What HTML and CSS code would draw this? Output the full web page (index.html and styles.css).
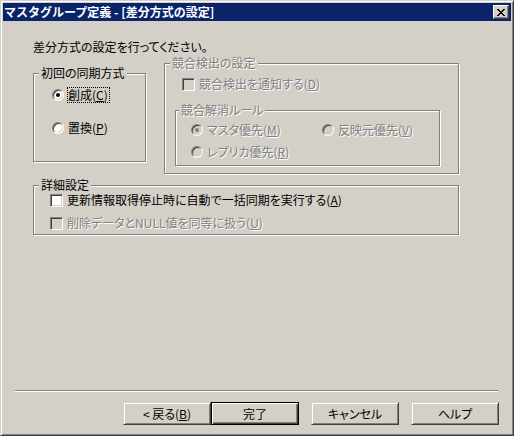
FILE: index.html
```html
<!DOCTYPE html>
<html lang="ja">
<head>
<meta charset="UTF-8">
<title>マスタグループ定義</title>
<link rel="stylesheet" href="styles.css">
</head>
<body>
<div class="window">
    <div class="titlebar">
        <span class="title">マスタグループ定義 - [差分方式の設定]</span>
        <span class="close">
            <svg width="8" height="7" viewBox="0 0 8 7" shape-rendering="crispEdges">
                <path d="M0 0h2v1h-2zM6 0h2v1h-2zM1 1h2v1h-2zM5 1h2v1h-2zM2 2h4v1h-4zM3 3h2v1h-2zM2 4h4v1h-4zM1 5h2v1h-2zM5 5h2v1h-2zM0 6h2v1h-2zM6 6h2v1h-2z" fill="#000"/>
            </svg>
        </span>
    </div>

    <div class="client">
        <p class="intro">差分方式の設定を行ってください。</p>

        <div class="row">
            <!-- 初回の同期方式 -->
            <fieldset class="group g-initial">
                <legend>初回の同期方式</legend>
                <div class="group-body">
                    <div class="opt radio checked"><span class="mark"></span><span class="focus">創成(<u>C</u>)</span></div>
                    <div class="opt radio second"><span class="mark"></span><span>置換(<u>P</u>)</span></div>
                </div>
            </fieldset>

            <!-- 競合検出 (無効) -->
            <fieldset class="group g-conflict disabled">
                <legend>競合検出の設定</legend>
                <div class="group-body">
                    <div class="opt check notify"><span class="box"></span><span>競合検出を通知する(<u>D</u>)</span></div>
                    <fieldset class="group g-rule">
                        <legend>競合解消ルール</legend>
                        <div class="group-body rule-grid">
                            <div class="opt radio checked"><span class="mark"></span><span>マスタ優先(<u>M</u>)</span></div>
                            <div class="opt radio"><span class="mark"></span><span>反映元優先(<u>V</u>)</span></div>
                            <div class="opt radio"><span class="mark"></span><span>レプリカ優先(<u>R</u>)</span></div>
                        </div>
                    </fieldset>
                </div>
            </fieldset>
        </div>

        <!-- 詳細設定 -->
        <fieldset class="group g-detail">
            <legend>詳細設定</legend>
            <div class="group-body">
                <div class="opt check"><span class="box"></span><span>更新情報取得停止時に自動で一括同期を実行する(<u>A</u>)</span></div>
                <div class="opt check disabled second"><span class="box"></span><span>削除データとNULL値を同等に扱う(<u>U</u>)</span></div>
            </div>
        </fieldset>

        <div class="footer">
            <div class="separator"></div>
            <div class="buttons">
                <button class="btn">&lt; 戻る(<u>B</u>)</button>
                <button class="btn default">完了</button>
                <button class="btn gap">キャンセル</button>
                <button class="btn gap">ヘルプ</button>
            </div>
        </div>
    </div>
</div>
</body>
</html>
```

FILE: styles.css
```css
*{
    box-sizing: border-box;
}
body{
    margin: 0;
    background-color: #d4d0c8;
    font-family: "Noto Sans CJK JP", sans-serif;
    font-size: 12px;
    line-height: 14px;
    color: #000;
    font-feature-settings: "palt";
}
u{
    text-decoration-thickness: 1px;
    text-underline-offset: 1px;
}

/* 窓枠 */
.window{
    width: 514px;
    height: 436px;
    border: 1px solid;
    border-color: #d4d0c8 #404040 #404040 #d4d0c8;
    box-shadow: inset 1px 1px #fff, inset -1px -1px #808080;
    padding: 2px;
    display: flex;
    flex-direction: column;
}
.titlebar{
    height: 18px;
    background-color: #0a246a;
    display: flex;
    align-items: center;
    justify-content: space-between;
    padding: 0 2px 0 1px;
}
.title{
    color: #fff;
    font-weight: bold;
    font-feature-settings: normal;
}
.close{
    width: 16px;
    height: 14px;
    background-color: #d4d0c8;
    border: 1px solid;
    border-color: #fff #404040 #404040 #fff;
    box-shadow: inset -1px -1px #808080;
    display: flex;
    align-items: center;
    justify-content: center;
}
.close svg{
    display: block;
}

.client{
    flex: 1;
    display: flex;
    flex-direction: column;
    padding: 19px 12px 8px 30px;
}
.intro{
    margin: 0;
}
.row{
    display: flex;
    gap: 18px;
    align-items: flex-start;
    margin-top: 3px;
}

/* グループボックス */
.group{
    margin: 0;
    padding: 0;
    min-width: 0;
    border: 1px solid #808080;
    box-shadow: 1px 1px #fff, inset 1px 1px #fff;
}
.group legend{
    margin-left: 5px;
    padding: 0 2px;
    line-height: 12px;
    background-color: #d4d0c8;
}
.g-initial{
    width: 113px;
    height: 95px;
    margin-top: 10px;
}
.g-initial .group-body{
    padding: 8px 0 0 18px;
}
.g-conflict{
    width: 295px;
    height: 117px;
}
.g-conflict > .group-body{
    padding: 8px 0 0 10px;
}
.notify{
    margin-left: 7px;
}
.g-rule{
    width: 265px;
    height: 62px;
    margin-top: 13px;
}
.g-rule legend{
    margin-left: 3px;
}
.rule-grid{
    display: grid;
    grid-template-columns: 131px 1fr;
    row-gap: 8px;
    padding: 7px 0 0 15px;
}
.g-detail{
    width: 426px;
    height: 56px;
    margin-top: 5px;
}
.g-detail .group-body{
    padding: 2px 0 0 16px;
}

/* ラジオ・チェック */
.opt{
    display: flex;
    align-items: center;
    min-height: 14px;
    white-space: nowrap;
}
.opt.second{
    margin-top: 18px;
}
.g-detail .opt.second{
    margin-top: 9px;
}
.mark{
    position: relative;
    width: 12px;
    height: 12px;
    border-radius: 50%;
    border: 1px solid;
    border-color: #808080 #fff #fff #808080;
    box-shadow: inset 1px 1px #404040, inset -1px -1px #d4d0c8;
    background-color: #fff;
    margin-right: 4px;
    flex: none;
}
.checked .mark::after{
    content: "";
    position: absolute;
    left: 3px;
    top: 3px;
    width: 4px;
    height: 4px;
    border-radius: 50%;
    background-color: #000;
}
.box{
    width: 13px;
    height: 13px;
    border: 1px solid;
    border-color: #808080 #fff #fff #808080;
    box-shadow: inset 1px 1px #404040, inset -1px -1px #d4d0c8;
    background-color: #fff;
    margin-right: 4px;
    flex: none;
}
.focus{
    border: 1px dotted #000;
    padding: 0 1px 0 0;
    margin-left: -1px;
}

/* 無効状態 */
.disabled,
.disabled legend{
    color: #808080;
    text-shadow: 1px 1px #fff;
}
.disabled .mark,
.disabled .box{
    background-color: #d4d0c8;
}
.disabled .checked .mark::after{
    background-color: #808080;
}

/* 下部ボタン */
.footer{
    margin-top: auto;
}
.separator{
    margin-left: -18px;
    width: 483px;
    height: 2px;
    border-top: 1px solid #808080;
    border-bottom: 1px solid #fff;
}
.buttons{
    display: flex;
    justify-content: flex-end;
    margin-top: 10px;
}
.btn{
    width: 88px;
    height: 23px;
    padding: 0;
    font: inherit;
    line-height: 14px;
    color: #000;
    background-color: #d4d0c8;
    border: 1px solid;
    border-color: #d4d0c8 #404040 #404040 #d4d0c8;
    box-shadow: inset 1px 1px #fff, inset -1px -1px #808080;
}
.btn.default{
    border-color: #000;
    box-shadow: inset 1px 1px #fff, inset -1px -1px #404040, inset -2px -2px #808080;
}
.btn.gap{
    margin-left: 12px;
}
```
